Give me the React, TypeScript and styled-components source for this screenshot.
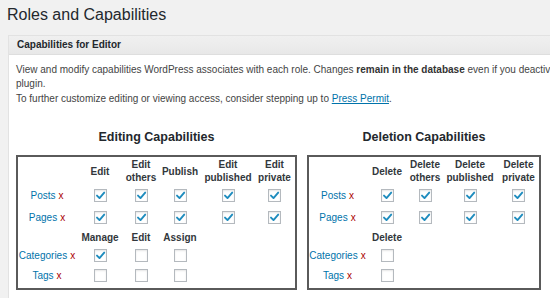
import React from 'react'
import styled, { createGlobalStyle } from 'styled-components'

const GlobalStyle = createGlobalStyle`
  html, body {
    margin: 0;
    padding: 0;
    background: #f1f1f1;
    overflow: hidden;
  }
  body {
    font-family: "Liberation Sans", Arial, Helvetica, sans-serif;
    color: #444;
  }
`

const Page = styled.div`
  width: 550px;
  height: 298px;
  overflow: hidden;
  padding-left: 8px;
  box-sizing: border-box;
`

const Title = styled.h1`
  margin: 0 0 0 -1px;
  padding-top: 5px;
  font-size: 16px;
  line-height: 20px;
  font-weight: 400;
  color: #23282d;
  white-space: nowrap;
`

const Panel = styled.div`
  margin-top: 10px;
  width: 620px;
  background: #fff;
  border: 1px solid #e2e2e2;
`

const PanelHeader = styled.div`
  height: 18px;
  line-height: 18px;
  padding-left: 8px;
  font-size: 10px;
  font-weight: 700;
  color: #23282d;
  background: linear-gradient(180deg, #f0f0f0 0%, #e8e8e8 100%);
  border-bottom: 1px solid #dedede;
`

const PanelBody = styled.div`
  padding: 8px 7px 20px;
`

const Text = styled.p<{ $gap?: number }>`
  margin: ${(p) => p.$gap ?? 0}px 0 0;
  max-width: 582px;
  font-size: 10px;
  line-height: 14px;
  color: #444;

  b {
    color: #333;
  }

  a {
    color: #0073aa;
    text-decoration: underline;
  }
`

const Sections = styled.div`
  display: flex;
  gap: 10px;
  margin-top: 23px;
`

const Section = styled.div<{ $width: number }>`
  width: ${(p) => p.$width}px;
  flex: none;
`

const SectionTitle = styled.h3`
  margin: 0 0 10px;
  text-align: center;
  font-size: 12.5px;
  line-height: 16px;
  font-weight: 700;
  color: #23282d;
`

const Grid = styled.div<{ $cols: number[] }>`
  display: grid;
  grid-template-columns: ${(p) => p.$cols.map((c) => `${c}px`).join(' ')};
  grid-template-rows: 28px 21px 22px 18px 18px 22px;
  padding-bottom: 2px;
  border: 2px solid #5a5a5a;
`

const HeadCell = styled.div`
  display: flex;
  align-items: center;
  justify-content: center;
  text-align: center;
  white-space: pre-line;
  font-size: 10px;
  line-height: 13px;
  font-weight: 700;
  color: #32373c;
`

const Cell = styled.div`
  display: flex;
  align-items: center;
  justify-content: center;
`

const RowLabel = styled.div`
  display: flex;
  align-items: center;
  justify-content: center;
  gap: 3px;
  font-size: 10px;
  white-space: nowrap;
`

const LabelLink = styled.span`
  color: #0073aa;
`

const Remove = styled.span`
  color: #a00;
`

const Check = styled.span`
  width: 13px;
  height: 13px;
  box-sizing: border-box;
  display: inline-flex;
  align-items: center;
  justify-content: center;
  border: 1px solid #b4b9be;
  background: #fff;
  box-shadow: inset 0 1px 2px rgba(0, 0, 0, 0.1);
`

type Row =
  | { kind: 'head'; labels: string[] }
  | { kind: 'item'; label: string; checks: boolean[] }

const editing: Row[] = [
  { kind: 'head', labels: ['Edit', 'Edit\nothers', 'Publish', 'Edit\npublished', 'Edit\nprivate'] },
  { kind: 'item', label: 'Posts', checks: [true, true, true, true, true] },
  { kind: 'item', label: 'Pages', checks: [true, true, true, true, true] },
  { kind: 'head', labels: ['Manage', 'Edit', 'Assign'] },
  { kind: 'item', label: 'Categories', checks: [true, false, false] },
  { kind: 'item', label: 'Tags', checks: [false, false, false] },
]

const deletion: Row[] = [
  { kind: 'head', labels: ['Delete', 'Delete\nothers', 'Delete\npublished', 'Delete\nprivate'] },
  { kind: 'item', label: 'Posts', checks: [true, true, true, true] },
  { kind: 'item', label: 'Pages', checks: [true, true, true, true] },
  { kind: 'head', labels: ['Delete'] },
  { kind: 'item', label: 'Categories', checks: [false] },
  { kind: 'item', label: 'Tags', checks: [false] },
]

const Checkbox: React.FC<{ checked: boolean }> = ({ checked }) => (
  <Check>
    {checked && (
      <svg width="11" height="11" viewBox="0 0 11 11">
        <path d="M2 5.6 L4.5 8.1 L9.2 2.6" fill="none" stroke="#1e8cbe" strokeWidth="1.9" strokeLinecap="round" strokeLinejoin="round" />
      </svg>
    )}
  </Check>
)

const CapTable: React.FC<{ cols: number[]; rows: Row[] }> = ({ cols, rows }) => {
  const count = cols.length - 1
  return (
    <Grid $cols={cols}>
      {rows.map((row, r) => {
        const cells: React.ReactNode[] = []
        if (row.kind === 'head') {
          cells.push(<Cell key="l" />)
          for (let i = 0; i < count; i++) {
            cells.push(<HeadCell key={i}>{row.labels[i] ?? ''}</HeadCell>)
          }
        } else {
          cells.push(
            <RowLabel key="l">
              <LabelLink>{row.label}</LabelLink>
              <Remove>x</Remove>
            </RowLabel>
          )
          for (let i = 0; i < count; i++) {
            cells.push(
              <Cell key={i}>{i < row.checks.length && <Checkbox checked={row.checks[i]} />}</Cell>
            )
          }
        }
        return <React.Fragment key={r}>{cells}</React.Fragment>
      })}
    </Grid>
  )
}

const App: React.FC = () => {
  return (
    <Page>
      <GlobalStyle />
      <Title>Roles and Capabilities</Title>
      <Panel>
        <PanelHeader>Capabilities for Editor</PanelHeader>
        <PanelBody>
          <Text>
            View and modify capabilities WordPress associates with each role. Changes{' '}
            <b>remain in the database</b> even if you deactivate this plugin.
          </Text>
          <Text $gap={1}>
            To further customize editing or viewing access, consider stepping up to{' '}
            <a href="#">Press Permit</a>.
          </Text>

          <Sections>
            <Section $width={281}>
              <SectionTitle>Editing Capabilities</SectionTitle>
              <CapTable cols={[58, 48, 34, 44, 52, 41]} rows={editing} />
            </Section>
            <Section $width={234}>
              <SectionTitle>Deletion Capabilities</SectionTitle>
              <CapTable cols={[57, 42, 34, 56, 41]} rows={deletion} />
            </Section>
          </Sections>
        </PanelBody>
      </Panel>
    </Page>
  )
}

export default App
